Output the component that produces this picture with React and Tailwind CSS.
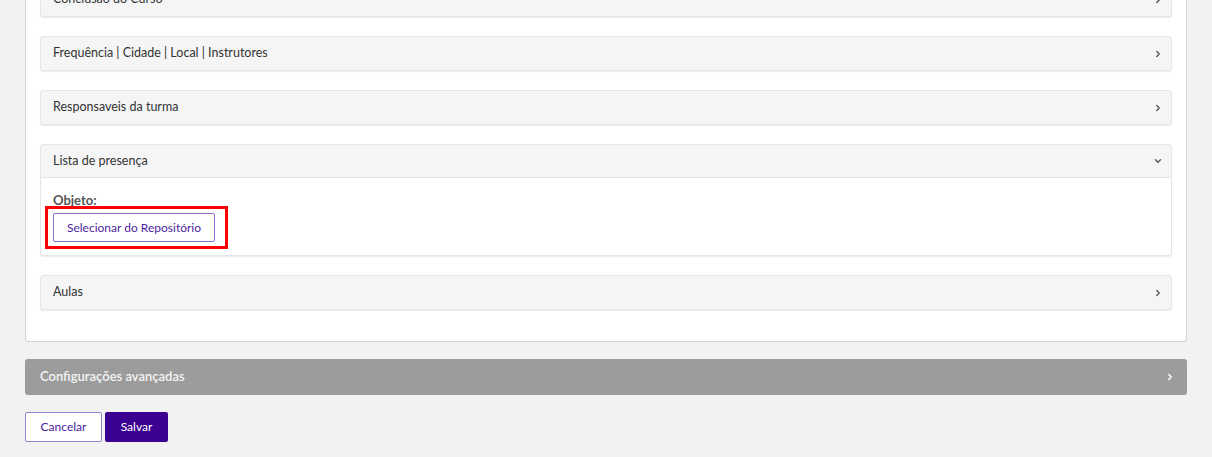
import React from "react";

const Chevron = ({ down = false, className = "" }) => (
  <svg width="10" height="10" viewBox="0 0 10 10" className={className} fill="none">
    {down ? (
      <path d="M2.5 3.8 L5 6.2 L7.5 3.8" stroke="currentColor" strokeWidth="1.4" strokeLinecap="round" strokeLinejoin="round" />
    ) : (
      <path d="M3.8 2.5 L6.2 5 L3.8 7.5" stroke="currentColor" strokeWidth="1.4" strokeLinecap="round" strokeLinejoin="round" />
    )}
  </svg>
);

const Item = ({ title, open = false, children }) => (
  <div className="rounded-[3px] border border-[#e6e6e6] bg-[#f5f5f5] shadow-[0_1px_1px_rgba(0,0,0,0.08)]">
    <div className={`flex h-[33px] items-center justify-between pl-[12px] pr-[8px] text-[12.5px] text-[#333] ${open ? "border-b border-[#e6e6e6]" : ""}`}>
      <span>{title}</span>
      <Chevron down={open} className="text-[#555]" />
    </div>
    {children}
  </div>
);

export default function App() {
  return (
    <div className="min-h-[457px] bg-[#f2f2f2] px-[25px] pb-[16px]" style={{ fontFamily: "Lato, 'Open Sans', sans-serif" }}>
      <div className="-mt-[33px] rounded-b-[3px] border border-[#d3d3d3] bg-white px-[14px] pt-[14px] pb-[31px]">
        <div className="flex flex-col gap-[19px]">
          <Item title="Conclusão do Curso" />
          <Item title="Frequência | Cidade | Local | Instrutores" />
          <Item title="Responsaveis da turma" />
          <Item title="Lista de presença" open>
            <div className="bg-white px-[12px] pt-[14px] pb-[13px] rounded-b-[3px]">
              <div className="text-[13px] font-bold leading-[16px] text-[#555]">Objeto:</div>
              <div className="relative mt-[5px] inline-block">
                <div className="pointer-events-none absolute -left-[8px] -top-[7px] -right-[13px] -bottom-[7px] border-[3px] border-[#ff0000]" />
                <button className="flex h-[29px] w-[162px] items-center justify-center rounded-[2px] border border-[#8c6cc9] bg-white text-[12px] text-[#4f1f9c]">
                  Selecionar do Repositório
                </button>
              </div>
            </div>
          </Item>
          <Item title="Aulas" />
        </div>
      </div>

      <div className="mt-[17px] flex h-[36px] items-center justify-between rounded-[3px] bg-[#9c9c9c] pl-[15px] pr-[12px] text-[13px] text-[#f4f4f4]">
        <span className="font-semibold">Configurações avançadas</span>
        <Chevron className="text-white" />
      </div>

      <div className="mt-[17px] flex gap-[3px]">
        <button className="flex h-[30px] w-[77px] items-center justify-center rounded-[2px] border border-[#9b7fd3] bg-white text-[12px] text-[#4a1a9c]">
          Cancelar
        </button>
        <button className="flex h-[30px] w-[63px] items-center justify-center rounded-[2px] bg-[#3b008f] text-[12px] text-white">
          Salvar
        </button>
      </div>
    </div>
  );
}
